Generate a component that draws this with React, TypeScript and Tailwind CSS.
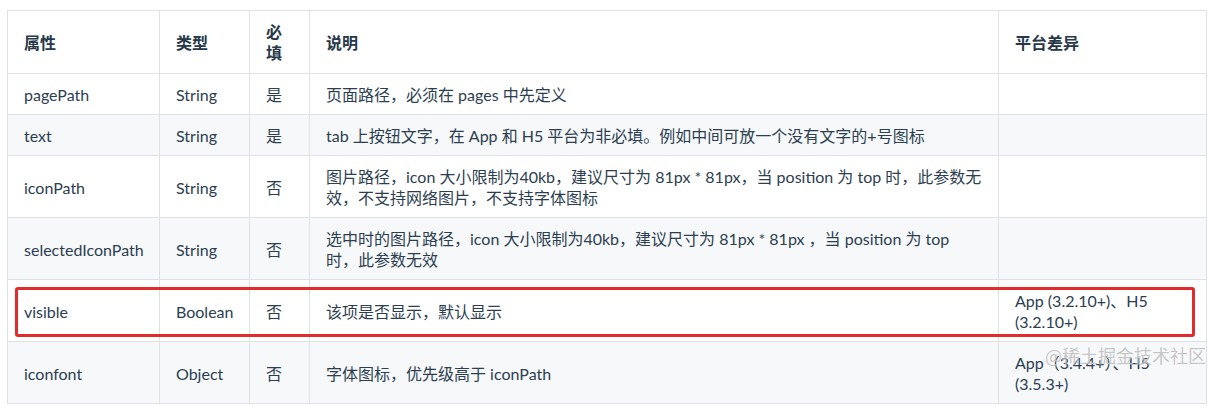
import React from "react";

type Row = { a: string; t: string; r: string; d: React.ReactNode; p: React.ReactNode };

const rows: Row[] = [
  { a: "pagePath", t: "String", r: "是", d: "页面路径，必须在 pages 中先定义", p: "" },
  { a: "text", t: "String", r: "是", d: "tab 上按钮文字，在 App 和 H5 平台为非必填。例如中间可放一个没有文字的+号图标", p: "" },
  {
    a: "iconPath",
    t: "String",
    r: "否",
    d: (
      <>
        图片路径，icon 大小限制为40kb，建议尺寸为 81px * 81px，当 position 为 top 时，此参数无
        <br />
        效，不支持网络图片，不支持字体图标
      </>
    ),
    p: "",
  },
  {
    a: "selectedIconPath",
    t: "String",
    r: "否",
    d: (
      <>
        选中时的图片路径，icon 大小限制为40kb，建议尺寸为 81px * 81px ，当 position 为 top
        <br />
        时，此参数无效
      </>
    ),
    p: "",
  },
  {
    a: "visible",
    t: "Boolean",
    r: "否",
    d: "该项是否显示，默认显示",
    p: (
      <>
        App (3.2.10+)、H5
        <br />
        (3.2.10+)
      </>
    ),
  },
  {
    a: "iconfont",
    t: "Object",
    r: "否",
    d: "字体图标，优先级高于 iconPath",
    p: (
      <>
        App（3.4.4+）、H5
        <br />
        (3.5.3+)
      </>
    ),
  },
];

export default function App() {
  return (
    <div
      className="relative w-[1220px] h-[418px] bg-white overflow-hidden text-[16px] leading-[21px] text-[#2c3e50]"
      style={{ fontFamily: 'Lato, "Noto Sans CJK SC", sans-serif' }}
    >
      <div className="pl-[7px] pt-[10px]">
        <table className="table-fixed border-collapse w-[1199px]">
          <colgroup>
            <col className="w-[152px]" />
            <col className="w-[90px]" />
            <col className="w-[60px]" />
            <col className="w-[689px]" />
            <col className="w-[208px]" />
          </colgroup>
          <thead>
            <tr className="bg-white">
              {["属性", "类型", "必填", "说明", "平台差异"].map((h) => (
                <th
                  key={h}
                  className="border border-[#dfe2e5] pl-4 pr-4 pt-[10px] pb-[10px] text-left align-middle font-bold text-[#273849]"
                >
                  {h}
                </th>
              ))}
            </tr>
          </thead>
          <tbody>
            {rows.map((r, i) => (
              <tr key={r.a} className={i % 2 === 1 ? "bg-[#f6f8fa]" : "bg-white"}>
                <td className="border border-[#dfe2e5] pl-4 pr-4 pt-[10px] pb-[9px] align-middle">{r.a}</td>
                <td className="border border-[#dfe2e5] pl-4 pr-4 pt-[10px] pb-[9px] align-middle">{r.t}</td>
                <td className="border border-[#dfe2e5] pl-4 pr-4 pt-[10px] pb-[9px] align-middle">{r.r}</td>
                <td className="border border-[#dfe2e5] pl-4 pr-2 pt-[10px] pb-[9px] align-middle whitespace-nowrap">{r.d}</td>
                <td className="border border-[#dfe2e5] pl-4 pr-2 pt-[10px] pb-[9px] align-middle whitespace-nowrap">{r.p}</td>
              </tr>
            ))}
          </tbody>
        </table>
      </div>

      {/* red highlight box */}
      <div className="absolute left-[15px] top-[287px] w-[1180px] h-[50px] border-[3px] border-[#e32b2b] rounded-[3px] pointer-events-none" />

      {/* watermark */}
      <div
        className="absolute right-[14px] top-[343px] text-[18px] leading-[24px] text-[rgba(150,150,150,0.55)] pointer-events-none"
        style={{ fontFamily: '"Noto Sans CJK SC", sans-serif', textShadow: "0 0 1px rgba(255,255,255,0.9)" }}
      >
        @稀土掘金技术社区
      </div>
    </div>
  );
}
